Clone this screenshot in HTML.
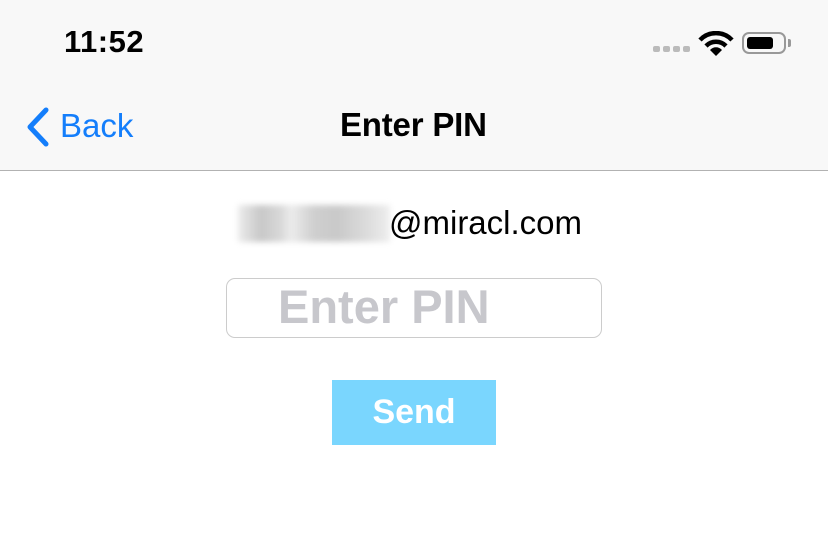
<!DOCTYPE html>
<html><head><meta charset="utf-8"><style>
body{margin:0;width:828px;height:551px;background:#fff;font-family:"Liberation Sans",sans-serif;position:relative;overflow:hidden}
.hdr{position:absolute;left:0;top:0;width:828px;height:170px;background:#f8f8f8;border-bottom:1px solid #b2b2b2}
.a{position:absolute;white-space:nowrap}
.d{display:inline-block;width:7px;height:6px;background:#bbb;border-radius:2px;margin-right:3px;vertical-align:top}
</style></head><body>
<div class="hdr"></div>
<div class="a" style="left:64px;top:24px;font-size:31px;font-weight:bold;color:#000;letter-spacing:0.5px">11:52</div>
<div class="a" style="left:653px;top:46px;line-height:6px"><span class="d"></span><span class="d"></span><span class="d"></span><span class="d"></span></div>
<svg class="a" style="left:698px;top:31px" width="36" height="26" viewBox="0 0 36 26">
<path d="M2 9 A22 22 0 0 1 34 9" stroke="#000" stroke-width="4.5" fill="none"/>
<path d="M8 15 A14 14 0 0 1 28 15" stroke="#000" stroke-width="4.5" fill="none"/>
<path d="M12 19 L18 25 L24 19 A8 8 0 0 0 12 19Z" fill="#000"/></svg>
<div class="a" style="left:742px;top:32px;width:44px;height:22px;border:2px solid #999;border-radius:7px;box-sizing:border-box"><div style="position:absolute;left:3px;top:3px;width:26px;height:12px;background:#000;border-radius:3px"></div></div>
<div class="a" style="left:788px;top:39px;width:3px;height:8px;background:#999;border-radius:0 2px 2px 0"></div>
<svg class="a" style="left:24px;top:106px" width="28" height="42" viewBox="0 0 28 42"><path d="M22 4 L6 21 L22 38" stroke="#147efb" stroke-width="5" fill="none" stroke-linecap="round" stroke-linejoin="round"/></svg>
<div class="a" style="left:60px;top:107px;font-size:33px;color:#147efb">Back</div>
<div class="a" style="left:340px;top:106px;font-size:33px;font-weight:bold;color:#000;letter-spacing:-0.2px">Enter PIN</div>
<div class="a" style="left:238px;top:205px;width:152px;height:37px;background:linear-gradient(90deg,#ececec,#c8c8c8 15%,#d8d8d8 28%,#ececec 35%,#cfcfcf 50%,#c9c9c9 65%,#dcdcdc 85%,#eee);filter:blur(3px)"></div>
<div class="a" style="left:389px;top:204px;font-size:33px;color:#000">@miracl.com</div>
<div class="a" style="left:226px;top:278px;width:376px;height:60px;border:1px solid #ccc;border-radius:9px;box-sizing:border-box"></div>
<div class="a" style="left:278px;top:279px;font-size:47px;font-weight:bold;color:#c7c7cc">Enter PIN</div>
<div class="a" style="left:332px;top:380px;width:164px;height:65px;background:#7ad6fe;color:#fff;font-size:34px;font-weight:bold;text-align:center;line-height:65px">Send</div>
</body></html>
